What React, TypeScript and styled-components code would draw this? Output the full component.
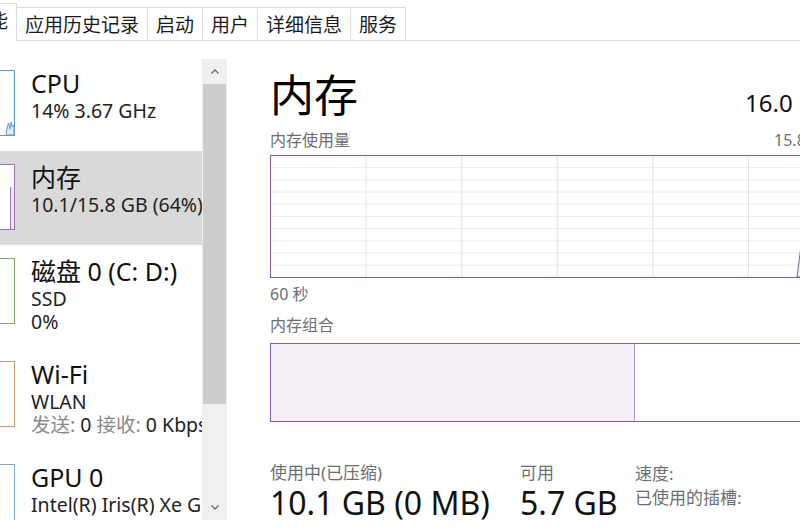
import React from "react";
import styled, { createGlobalStyle } from "styled-components";

const GlobalStyle = createGlobalStyle`
  html, body { margin: 0; padding: 0; background: #fff; overflow: hidden; }
  body { font-family: "Noto Sans", "Noto Sans CJK SC", sans-serif; color: #000; }
`;

const Window = styled.div`
  width: 800px;
  height: 530px;
  overflow: hidden;
  display: flex;
  flex-direction: column;
  background: #fff;
`;

const TabBar = styled.div`
  flex: none;
  height: 41px;
  display: flex;
  align-items: flex-end;
`;

const Tab = styled.div<{ $active?: boolean; $lead?: boolean }>`
  flex: none;
  box-sizing: border-box;
  height: ${(p) => (p.$active ? "38px" : "34px")};
  padding: 0 8px;
  display: flex;
  align-items: center;
  font-size: 19px;
  color: #1a1a1a;
  white-space: nowrap;
  background: #fff;
  border-top: 1px solid #dadada;
  border-right: 1px solid #dadada;
  border-bottom: 1px solid ${(p) => (p.$active ? "transparent" : "#dadada")};
  margin-left: ${(p) => (p.$lead ? "-38px" : "0")};
  padding-bottom: ${(p) => (p.$active ? "4px" : "0")};
`;

const TabFill = styled.div`
  flex: 1;
  height: 34px;
  box-sizing: border-box;
  border-bottom: 1px solid #dadada;
`;

const Main = styled.div`
  flex: 1;
  min-height: 0;
  display: flex;
`;

const Sidebar = styled.div`
  flex: none;
  width: 228px;
  box-sizing: border-box;
  padding: 16px 1px 10px 0;
  display: flex;
`;

const List = styled.div`
  width: 202px;
  overflow: hidden;
  display: flex;
  flex-direction: column;
`;

const Row = styled.div<{ $selected?: boolean }>`
  flex: none;
  display: flex;
  gap: 16px;
  min-height: 93px;
  box-sizing: border-box;
  padding: 10px 0 15px;
  background: ${(p) => (p.$selected ? "#d9d9d9" : "transparent")};
`;

const Thumb = styled.div<{ $color: string }>`
  flex: none;
  width: 15px;
  height: 66px;
  margin-top: 3px;
  box-sizing: border-box;
  background: #fff;
  border: 1px solid ${(p) => p.$color};
  border-left: none;
  display: flex;
`;

const RowText = styled.div`
  display: flex;
  flex-direction: column;
  white-space: nowrap;
`;

const RowTitle = styled.div`
  font-size: 25px;
  line-height: 32px;
  color: #111;
`;

const RowSub = styled.div`
  font-size: 19.5px;
  line-height: 23px;
  color: #222;
`;

const Muted = styled.span`
  color: #8a8a8a;
`;

const Scrollbar = styled.div`
  flex: none;
  width: 25px;
  display: flex;
  flex-direction: column;
  background: #f0f0f0;
  margin-top: 2px;
`;

const ScrollArrow = styled.div`
  flex: none;
  height: 25px;
  display: flex;
  align-items: center;
  justify-content: center;
`;

const ScrollThumb = styled.div`
  flex: none;
  height: 320px;
  margin: 0 1px;
  background: #cdcdcd;
`;

const ScrollTrack = styled.div`
  flex: 1;
`;

const Content = styled.div`
  flex: none;
  width: 562px;
  padding: 28px 0 0 42px;
  display: flex;
  flex-direction: column;
`;

const Header = styled.div`
  display: flex;
  justify-content: space-between;
  align-items: baseline;
  height: 52px;
`;

const BigTitle = styled.div`
  font-size: 44px;
  line-height: 52px;
  color: #000;
`;

const Capacity = styled.div`
  font-size: 24px;
  line-height: 30px;
  color: #111;
  white-space: nowrap;
`;

const LabelRow = styled.div<{ $gap: number }>`
  display: flex;
  justify-content: space-between;
  margin-top: ${(p) => p.$gap}px;
  font-size: 16px;
  line-height: 20px;
  color: #6e6e6e;
  white-space: nowrap;
`;

const Graph = styled.div`
  margin-top: 5px;
  height: 123px;
  box-sizing: border-box;
  border: 1px solid #8e5a9e;
  background-color: #fff;
  background-image: linear-gradient(to right, #e2e2e2 1px, transparent 1px),
    linear-gradient(to bottom, #ebebeb 1px, transparent 1px);
  background-size: 95.6px 100%, 100% 12.2px;
  background-position: -1px 0, 0 -1px;
  display: flex;
`;

const CompBar = styled.div`
  margin-top: 8px;
  height: 79px;
  box-sizing: border-box;
  border: 1px solid #8e5a9e;
  display: flex;
`;

const CompSeg = styled.div<{ $fill: string; $divider?: boolean }>`
  background: ${(p) => p.$fill};
  border-right: ${(p) => (p.$divider ? "1px solid #b48fc0" : "none")};
`;

const Stats = styled.div`
  margin-top: 40px;
  display: flex;
`;

const StatCol = styled.div<{ $w?: number }>`
  flex: none;
  width: ${(p) => (p.$w ? `${p.$w}px` : "auto")};
  display: flex;
  flex-direction: column;
  white-space: nowrap;
`;

const StatLabel = styled.div`
  font-size: 17px;
  line-height: 22px;
  color: #6e6e6e;
`;

const StatValue = styled.div`
  font-size: 32px;
  line-height: 38px;
  color: #111;
`;

const KeyLine = styled.div`
  font-size: 17px;
  line-height: 24px;
  color: #6e6e6e;
`;

const Chevron = ({ up }: { up?: boolean }) => (
  <svg width="10" height="7" viewBox="0 0 10 7">
    <path
      d={up ? "M1.5 5.5 L5 2 L8.5 5.5" : "M1.5 1.5 L5 5 L8.5 1.5"}
      fill="none"
      stroke="#6a6a6a"
      strokeWidth="1.3"
    />
  </svg>
);

const CpuSpark = () => (
  <svg width="14" height="64" viewBox="0 0 14 64">
    <path
      d="M6 64 L7 57 L8.5 52 L10 58 L11 51 L12.5 56 L14 54 L14 64 Z"
      fill="#dbeaf5"
      stroke="#5b9bd0"
      strokeWidth="1"
    />
  </svg>
);

const MemSpark = () => (
  <svg width="14" height="64" viewBox="0 0 14 64">
    <rect x="10" y="22" width="4" height="42" fill="#efe6f3" />
    <line x1="10.5" y1="22" x2="10.5" y2="64" stroke="#a070b0" strokeWidth="1" />
  </svg>
);

const MemGraphLine = () => (
  <svg width="560" height="121" viewBox="0 0 560 121">
    <path d="M526 121 L536 44 L560 44 L560 121 Z" fill="#f4eff6" stroke="#8e5a9e" strokeWidth="1" />
  </svg>
);

const tabs = ["应用历史记录", "启动", "用户", "详细信息", "服务"];

export default function App() {
  return (
    <Window>
      <GlobalStyle />
      <TabBar>
        <Tab $active $lead>性能</Tab>
        {tabs.map((t) => (
          <Tab key={t}>{t}</Tab>
        ))}
        <TabFill />
      </TabBar>
      <Main>
        <Sidebar>
          <List>
            <Row>
              <Thumb $color="#5b9bd0">
                <CpuSpark />
              </Thumb>
              <RowText>
                <RowTitle>CPU</RowTitle>
                <RowSub>14% 3.67 GHz</RowSub>
              </RowText>
            </Row>
            <Row $selected>
              <Thumb $color="#a070b0">
                <MemSpark />
              </Thumb>
              <RowText>
                <RowTitle>内存</RowTitle>
                <RowSub>10.1/15.8 GB (64%)</RowSub>
              </RowText>
            </Row>
            <Row>
              <Thumb $color="#86a36a" />
              <RowText>
                <RowTitle>磁盘 0 (C: D:)</RowTitle>
                <RowSub>SSD</RowSub>
                <RowSub>0%</RowSub>
              </RowText>
            </Row>
            <Row>
              <Thumb $color="#c09a6a" />
              <RowText>
                <RowTitle>Wi-Fi</RowTitle>
                <RowSub>WLAN</RowSub>
                <RowSub>
                  <Muted>发送:</Muted> 0 <Muted>接收:</Muted> 0 Kbps
                </RowSub>
              </RowText>
            </Row>
            <Row>
              <Thumb $color="#7fa8c8" />
              <RowText>
                <RowTitle>GPU 0</RowTitle>
                <RowSub>Intel(R) Iris(R) Xe Graphics</RowSub>
                <RowSub>4%</RowSub>
              </RowText>
            </Row>
          </List>
          <Scrollbar>
            <ScrollArrow>
              <Chevron up />
            </ScrollArrow>
            <ScrollThumb />
            <ScrollTrack />
            <ScrollArrow>
              <Chevron />
            </ScrollArrow>
          </Scrollbar>
        </Sidebar>
        <Content>
          <Header>
            <BigTitle>内存</BigTitle>
            <Capacity>16.0 GB</Capacity>
          </Header>
          <LabelRow $gap={9}>
            <span>内存使用量</span>
            <span>15.8 GB</span>
          </LabelRow>
          <Graph>
            <MemGraphLine />
          </Graph>
          <LabelRow $gap={6}>
            <span>60 秒</span>
          </LabelRow>
          <LabelRow $gap={11}>
            <span>内存组合</span>
          </LabelRow>
          <CompBar>
            <CompSeg $fill="#f4eff6" $divider style={{ width: "64.8%" }} />
            <CompSeg $fill="#fff" style={{ flex: 1 }} />
          </CompBar>
          <Stats>
            <StatCol $w={250}>
              <StatLabel>使用中(已压缩)</StatLabel>
              <StatValue>10.1 GB (0 MB)</StatValue>
            </StatCol>
            <StatCol $w={115}>
              <StatLabel>可用</StatLabel>
              <StatValue>5.7 GB</StatValue>
            </StatCol>
            <StatCol>
              <KeyLine>速度:</KeyLine>
              <KeyLine>已使用的插槽:</KeyLine>
            </StatCol>
          </Stats>
        </Content>
      </Main>
    </Window>
  );
}
